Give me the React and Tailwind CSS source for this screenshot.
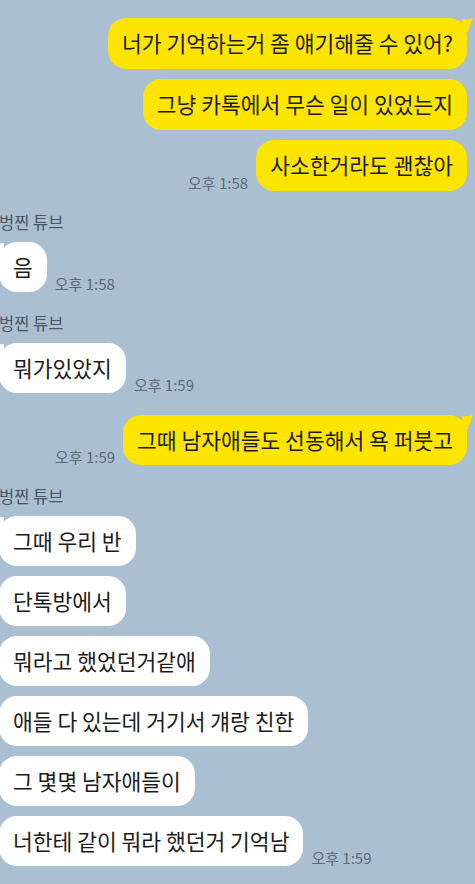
const FONT = { fontFamily: '"Noto Sans CJK KR", "Noto Sans", sans-serif' };

const YellowTail = () => (
  <svg className="absolute -right-[6px] top-0" width="11" height="14" viewBox="0 0 11 14">
    <path d="M0 1 Q6 2 11 0 Q8 6 6 14 L0 14 Z" fill="#fee500" />
  </svg>
);

const WhiteTail = () => (
  <svg className="absolute -left-[6px] top-0" width="11" height="14" viewBox="0 0 11 14">
    <path d="M11 1 Q5 2 0 0 Q3 6 5 14 L11 14 Z" fill="#ffffff" />
  </svg>
);

const Time = ({ children }) => (
  <span className="shrink-0 text-[15px] leading-[17px] text-[#5b6a77]">{children}</span>
);

const MyBubble = ({ text, time, tail }) => (
  <div className="flex items-end justify-end gap-2">
    {time && <Time>{time}</Time>}
    <div className="relative rounded-[18px] bg-[#fee500] px-[14px] py-[12px] text-[21.5px] leading-[26.5px] text-[#1b1b1b]">
      {tail && <YellowTail />}
      {text}
    </div>
  </div>
);

const TheirBubble = ({ text, time, tail }) => (
  <div className="flex items-end gap-2">
    <div className="relative rounded-[18px] bg-white px-[14px] py-[12px] text-[21.5px] leading-[26px] text-[#1b1b1b]">
      {tail && <WhiteTail />}
      {text}
    </div>
    {time && <Time>{time}</Time>}
  </div>
);

const Mine = ({ items, time }) => (
  <div className="flex flex-col gap-[10.5px] pr-2">
    {items.map((t, i) => (
      <MyBubble key={i} text={t} tail={i === 0} time={i === items.length - 1 ? time : null} />
    ))}
  </div>
);

const Theirs = ({ items, time }) => (
  <div className="flex flex-col">
    <div className="-ml-[1px] mb-[9px] text-[16.5px] leading-[22px] text-[#4a5561]">벙찐 튜브</div>
    <div className="-ml-[1px] flex flex-col gap-[10px]">
      {items.map((t, i) => (
        <TheirBubble key={i} text={t} tail={i === 0} time={i === items.length - 1 ? time : null} />
      ))}
    </div>
  </div>
);

export default function App() {
  return (
    <div className="h-[884px] overflow-hidden bg-[#aabfd1] pt-[18px]" style={FONT}>
      <div className="flex flex-col gap-[20px]">
        <Mine
          items={["너가 기억하는거 좀 얘기해줄 수 있어?", "그냥 카톡에서 무슨 일이 있었는지", "사소한거라도 괜찮아"]}
          time="오후 1:58"
        />
        <Theirs items={["음"]} time="오후 1:58" />
        <Theirs items={["뭐가있았지"]} time="오후 1:59" />
        <div className="pt-[2px]">
          <Mine items={["그때 남자애들도 선동해서 욕 퍼붓고"]} time="오후 1:59" />
        </div>
        <Theirs
          items={[
            "그때 우리 반",
            "단톡방에서",
            "뭐라고 했었던거같애",
            "애들 다 있는데 거기서 걔랑 친한",
            "그 몇몇 남자애들이",
            "너한테 같이 뭐라 했던거 기억남",
          ]}
          time="오후 1:59"
        />
      </div>
    </div>
  );
}
